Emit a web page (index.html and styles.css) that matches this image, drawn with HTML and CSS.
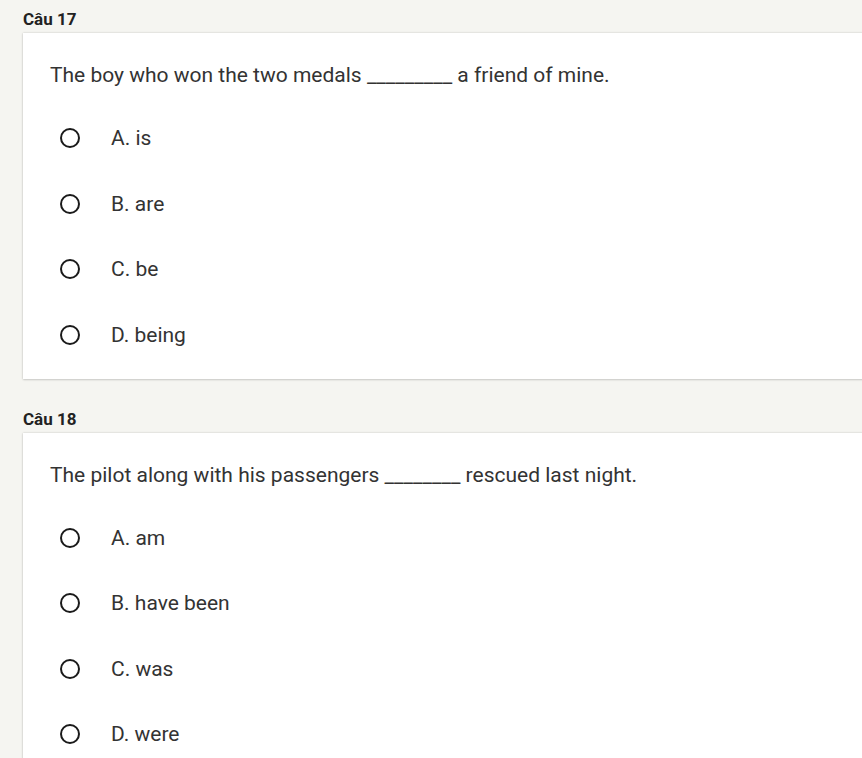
FILE: index.html
```html
<!DOCTYPE html>
<html lang="vi">
<head>
<meta charset="utf-8">
<link rel="stylesheet" href="styles.css">
</head>
<body>
<div class="page">
  <section class="q">
    <h3 class="q-title">Câu 17</h3>
    <div class="card">
      <p class="q-text">The boy who won the two medals _________ a friend of mine.</p>
      <ul class="opts">
        <li class="opt"><span class="radio"></span><span>A. is</span></li>
        <li class="opt"><span class="radio"></span><span>B. are</span></li>
        <li class="opt"><span class="radio"></span><span>C. be</span></li>
        <li class="opt"><span class="radio"></span><span>D. being</span></li>
      </ul>
    </div>
  </section>
  <section class="q">
    <h3 class="q-title">Câu 18</h3>
    <div class="card">
      <p class="q-text">The pilot along with his passengers ________ rescued last night.</p>
      <ul class="opts">
        <li class="opt"><span class="radio"></span><span>A. am</span></li>
        <li class="opt"><span class="radio"></span><span>B. have been</span></li>
        <li class="opt"><span class="radio"></span><span>C. was</span></li>
        <li class="opt"><span class="radio"></span><span>D. were</span></li>
      </ul>
    </div>
  </section>
</div>
</body>
</html>
```
FILE: styles.css
```css
html, body {
  margin: 0;
  padding: 0;
  background: #f5f5f1;
  overflow: hidden;
}
body {
  font-family: Roboto, "Liberation Sans", sans-serif;
  color: #333;
}
.page {
  padding: 9px 0 0 23px;
}
.q {
  margin-bottom: 30px;
}
.q-title {
  margin: 0 0 3px 0;
  font-size: 17px;
  font-weight: 700;
  line-height: 21px;
  color: #222;
}
.card {
  width: 900px;
  background: #fff;
  box-shadow: 0 0 2px rgba(0,0,0,0.18), 0 1px 2px rgba(0,0,0,0.12);
  padding: 29px 0 31px 27px;
  box-sizing: border-box;
}
.q-text {
  margin: 0;
  font-size: 21px;
  line-height: 26px;
  color: #333;
}
.opts {
  list-style: none;
  margin: 37px 0 0 0;
  padding: 0;
  display: flex;
  flex-direction: column;
  gap: 39.5px;
}
.opt {
  display: flex;
  align-items: center;
  height: 26px;
  font-size: 21px;
  color: #333;
}
.radio {
  width: 16px;
  height: 16px;
  border: 2px solid #1a1a1a;
  border-radius: 50%;
  margin-left: 10px;
  margin-right: 31px;
  flex: none;
}
```
